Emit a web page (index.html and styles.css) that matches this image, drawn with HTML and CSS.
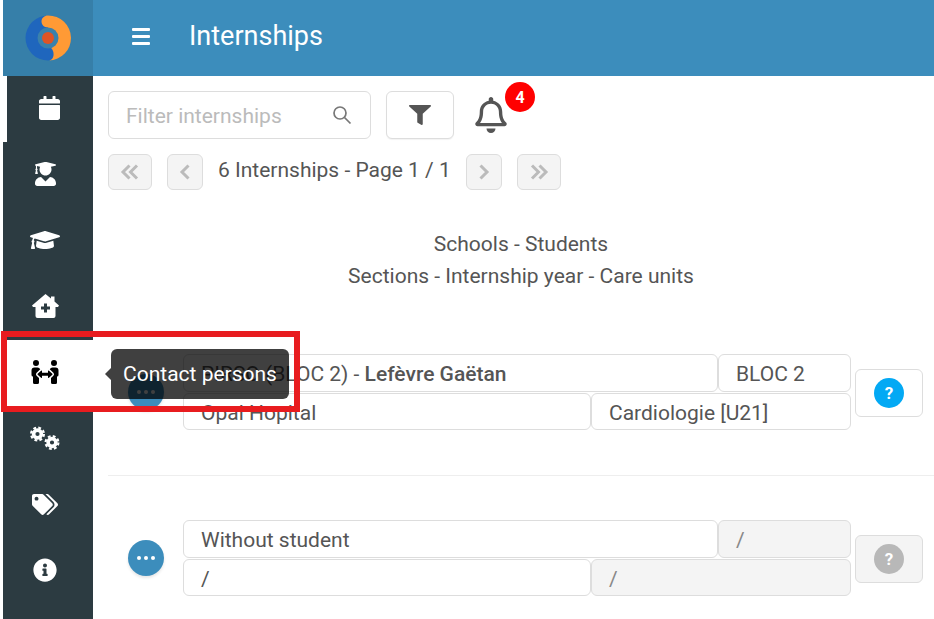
FILE: index.html
```html
<!DOCTYPE html>
<html lang="en">
<head>
<meta charset="utf-8">
<title>Internships</title>
<link rel="stylesheet" href="styles.css">
</head>
<body>
<header class="topbar">
  <div class="logo-cell">
    <svg class="logo" viewBox="0 0 46 46"><circle cx="23" cy="23" r="22.500" fill="#1f66bd"/><path d="M23 .5A22.500 22.500 0 0 1 24 45.500C28 45 29.500 40 28 36C26.500 32 23 31 23 23L23 12.500C19 12.500 16.500 9.500 16.500 6.500C16.500 3 19.500 .5 23 .5Z" fill="#ff9a35"/><circle cx="23" cy="23" r="10.500" fill="#3a81ab"/><circle cx="23" cy="23" r="6" fill="#e05424"/></svg>
  </div>
  <button class="burger" type="button" aria-label="Menu"><span></span><span></span><span></span></button>
  <h1 class="page-title">Internships</h1>
</header>
<div class="body">
  <nav class="sidebar">
    <a class="nav-item first"><svg class="ico" width="21" height="24" viewBox="0 0 448 512"><path d="M12 192h424c6.600 0 12 5.400 12 12v260c0 26.500-21.500 48-48 48H48c-26.500 0-48-21.500-48-48V204c0-6.600 5.400-12 12-12zm436-44v-36c0-26.500-21.500-48-48-48h-48V12c0-6.600-5.400-12-12-12h-40c-6.600 0-12 5.400-12 12v52H160V12c0-6.600-5.400-12-12-12h-40c-6.600 0-12 5.400-12 12v52H48C21.500 64 0 85.500 0 112v36c0 6.600 5.400 12 12 12h424c6.600 0 12-5.400 12-12z"/></svg></a>
    <a class="nav-item"><svg class="ico" width="21" height="24" viewBox="0 0 448 512"><path d="M319.400 320.600L224 416l-95.400-95.400C57.100 323.700 0 382.200 0 454.400v9.600c0 26.500 21.500 48 48 48h352c26.500 0 48-21.500 48-48v-9.600c0-72.200-57.100-130.700-128.600-133.800zM13.600 79.800l6.400 1.500v58.400c-7 4.200-12 11.500-12 20.300 0 8.400 4.600 15.400 11.100 19.700L3.500 242c-1.700 6.900 2.100 14 7.600 14h41.800c5.500 0 9.300-7.100 7.600-14l-15.600-62.300C51.400 175.400 56 168.400 56 160c0-8.800-5-16.100-12-20.300V87.100l66 15.900c-8.600 17.200-14 36.400-14 57 0 70.700 57.300 128 128 128s128-57.300 128-128c0-20.600-5.300-39.800-14-57l96.300-23.200c18.200-4.400 18.200-27.100 0-31.500l-190.400-46c-13-3.100-26.700-3.100-39.700 0L13.600 48.200c-18.100 4.400-18.100 27.200 0 31.600z"/></svg></a>
    <a class="nav-item"><svg class="ico" width="30" height="24" viewBox="0 0 640 512"><path d="M622.340 153.200L343.400 67.500c-15.200-4.670-31.600-4.670-46.790 0L17.660 153.200c-23.540 7.230-23.540 38.360 0 45.590l48.630 14.940c-10.670 13.190-17.230 29.280-17.880 46.900C38.780 266.150 32 276.110 32 288c0 10.780 5.680 19.850 13.860 25.650L20.330 428.530C18.110 438.520 25.710 448 35.940 448h56.110c10.240 0 17.840-9.480 15.620-19.470L82.140 313.650C90.320 307.850 96 298.780 96 288c0-11.570-6.470-21.250-15.660-26.870.76-15.020 8.440-28.300 20.690-36.720L296.600 284.500c9.060 2.780 26.440 6.250 46.790 0l278.950-85.700c23.550-7.240 23.550-38.360 0-45.600zM352.790 315.090c-28.530 8.760-52.840 3.920-65.590 0l-145.020-44.550L128 384c0 35.350 85.960 64 192 64s192-28.650 192-64l-14.180-113.470-145.030 44.560z"/></svg></a>
    <a class="nav-item"><svg class="ico" width="27" height="24" viewBox="0 0 27 24"><path fill-rule="evenodd" d="M13.500 0L19 4.500V2.500H22.500V7.500L27 11.500L26 13H23.500V22a2 2 0 0 1-2 2H5.500a2 2 0 0 1-2-2V13H1L0 11.500ZM12 9.500H15V12.500H18V15.500H15V18.500H12V15.500H9V12.500H12Z"/></svg></a>
    <a class="nav-item active"><svg class="ico" width="28" height="24" viewBox="0 0 576 512"><path d="M96,128A64,64,0,1,0,32,64,64,64,0,0,0,96,128Zm0,176.080a44.110,44.110,0,0,1,13.640-32L181.770,204c1.650-1.550,3.770-2.310,5.610-3.570A63.910,63.910,0,0,0,128,160H64A64,64,0,0,0,0,224V320a32,32,0,0,0,32,32V480a32,32,0,0,0,32,32h64a32,32,0,0,0,32-32V383.610l-50.360-47.530A44.080,44.080,0,0,1,96,304.080ZM480,128a64,64,0,1,0-64-64A64,64,0,0,0,480,128Zm32,32H448a63.910,63.910,0,0,0-59.380,40.420c1.840,1.270,4,2,5.620,3.590l72.120,68.060a44.370,44.370,0,0,1,0,64L416,383.620V480a32,32,0,0,0,32,32h64a32,32,0,0,0,32-32V352a32,32,0,0,0,32-32V224A64,64,0,0,0,512,160ZM444.400,295.340l-72.120-68.060A12,12,0,0,0,352,236v36H224V236a12,12,0,0,0-20.280-8.730L131.600,295.340a12.400,12.400,0,0,0,0,17.470l72.120,68.070A12,12,0,0,0,224,372.140V336H352v36.140a12,12,0,0,0,20.280,8.740l72.120-68.070A12.400,12.400,0,0,0,444.400,295.340Z"/></svg></a>
    <a class="nav-item"><svg class="ico" width="30" height="24" viewBox="0 0 30 24"><g fill="none" stroke="#fff"><circle cx="7.500" cy="8" r="3.900" stroke-width="3.600"/><circle cx="7.500" cy="8" r="6.400" stroke-width="2.200" stroke-dasharray="2.800 2.230"/><circle cx="22" cy="16.500" r="3.900" stroke-width="3.600"/><circle cx="22" cy="16.500" r="6.400" stroke-width="2.200" stroke-dasharray="2.800 2.230"/></g></svg></a>
    <a class="nav-item"><svg class="ico" width="26" height="21" viewBox="0 0 640 512"><path d="M497.941 225.941L286.059 14.059A48 48 0 0 0 252.118 0H48C21.490 0 0 21.490 0 48v204.118a48 48 0 0 0 14.059 33.941l211.882 211.882c18.744 18.745 49.136 18.746 67.882 0l204.118-204.118c18.745-18.745 18.745-49.137 0-67.882zM112 160c-26.510 0-48-21.490-48-48s21.490-48 48-48 48 21.490 48 48-21.490 48-48 48zm513.941 133.823L421.823 497.941c-18.745 18.745-49.137 18.745-67.882 0l-.36-.36L527.640 323.522c16.999-16.999 26.360-39.600 26.360-63.640s-9.362-46.641-26.360-63.640L331.397 0h48.721a48 48 0 0 1 33.941 14.059l211.882 211.882c18.745 18.745 18.745 49.137 0 67.882z"/></svg></a>
    <a class="nav-item"><svg class="ico" width="24" height="24" viewBox="0 0 512 512"><path d="M256 8C119.043 8 8 119.083 8 256c0 136.997 111.043 248 248 248s248-111.003 248-248C504 119.083 392.957 8 256 8zm0 110c23.196 0 42 18.804 42 42s-18.804 42-42 42-42-18.804-42-42 18.804-42 42-42zm56 254c0 6.627-5.373 12-12 12h-88c-6.627 0-12-5.373-12-12v-24c0-6.627 5.373-12 12-12h12v-64h-12c-6.627 0-12-5.373-12-12v-24c0-6.627 5.373-12 12-12h64c6.627 0 12 5.373 12 12v100h12c6.627 0 12 5.373 12 12v24z"/></svg></a>
  </nav>
  <main class="content">
    <div class="toolbar">
      <label class="search"><span class="placeholder">Filter internships</span>
        <svg width="20" height="20" viewBox="0 0 20 20" fill="none" stroke="#777" stroke-width="1.700"><circle cx="8" cy="8" r="6"/><path d="M12.500 12.500L18.500 18.500"/></svg>
      </label>
      <button class="filter-btn" type="button" aria-label="Filter"><svg width="22" height="20" viewBox="0 0 512 512" preserveAspectRatio="none" fill="#555"><path d="M487.976 0H24.028C2.710 0-8.047 25.866 7.058 40.971L192 225.941V432c0 7.831 3.821 15.170 10.237 19.662l80 55.980C298.020 518.690 320 507.493 320 487.980V225.941l184.947-184.970C520.021 25.896 509.338 0 487.976 0z"/></svg></button>
      <div class="bell">
        <svg width="32" height="36" viewBox="0 0 448 512" fill="#555"><path d="M439.390 362.290c-19.320-20.760-55.470-51.990-55.470-154.290 0-77.700-54.480-139.900-127.940-155.160V32c0-17.670-14.320-32-31.980-32s-31.980 14.330-31.980 32v20.840C118.560 68.100 64.080 130.300 64.080 208c0 102.300-36.150 133.530-55.470 154.290-6 6.450-8.660 14.160-8.610 21.710.11 16.400 12.980 32 32.100 32h383.800c19.120 0 32-15.600 32.100-32 .05-7.550-2.610-15.270-8.610-21.710zM67.530 368c21.220-27.970 44.420-74.330 44.530-159.420 0-.2-.06-.38-.06-.58 0-61.860 50.140-112 112-112s112 50.140 112 112c0 .2-.06.38-.06.58.11 85.100 23.310 131.460 44.530 159.420H67.530zM224 512c35.320 0 63.970-28.650 63.970-63.970H160.030C160.030 483.350 188.680 512 224 512z"/></svg>
        <span class="badge">4</span>
      </div>
    </div>
    <div class="pager">
      <button class="page-btn wide" type="button" aria-label="First"><svg width="20" height="16" viewBox="0 0 20 16"><path d="M9.500 1.500L3 8l6.500 6.500M17 1.500L10.500 8l6.500 6.500"/></svg></button>
      <button class="page-btn" type="button" aria-label="Previous"><svg width="12" height="16" viewBox="0 0 12 16"><path d="M9.500 1.500L3 8l6.500 6.500"/></svg></button>
      <span class="page-text">6 Internships - Page 1 / 1</span>
      <button class="page-btn" type="button" aria-label="Next"><svg width="12" height="16" viewBox="0 0 12 16"><path d="M2.500 1.500L9 8l-6.500 6.500"/></svg></button>
      <button class="page-btn wide" type="button" aria-label="Last"><svg width="20" height="16" viewBox="0 0 20 16"><path d="M3 1.500L9.500 8 3 14.500M10.500 1.500L17 8l-6.500 6.500"/></svg></button>
    </div>
    <div class="columns">
      <div>Schools - Students</div>
      <div>Sections - Internship year - Care units</div>
    </div>
    <section class="row first-row">
      <button class="more" type="button" aria-label="More"><i></i><i></i><i></i></button>
      <div class="fields">
        <div class="field"><span>PIRSO (BLOC 2) - <b>Lefèvre Gaëtan</b></span></div>
        <div class="field">BLOC 2</div>
        <div class="field line2 a">Opal Hopital</div>
        <div class="field line2 b">Cardiologie [U21]</div>
      </div>
      <button class="state" type="button"><span class="q blue">?</span></button>
    </section>
    <section class="row second-row">
      <button class="more" type="button" aria-label="More"><i></i><i></i><i></i></button>
      <div class="fields">
        <div class="field">Without student</div>
        <div class="field off">/</div>
        <div class="field line2 a">/</div>
        <div class="field line2 b off">/</div>
      </div>
      <button class="state off" type="button"><span class="q grey">?</span></button>
    </section>
  </main>
</div>
<div class="tooltip">Contact persons</div>
<div class="annotation"></div>
</body>
</html>
```

FILE: styles.css
```css
* { box-sizing: border-box; }
html, body { margin: 0; height: 100%; }
body {
  width: 934px;
  height: 619px;
  overflow: hidden;
  font-family: Roboto, "Liberation Sans", sans-serif;
  font-size: 21px;
  color: #555;
  background: #fff;
  position: relative;
  padding-left: 3px;
}
button { font: inherit; padding: 0; cursor: pointer; }

.topbar {
  height: 76px;
  margin-left: -3px;
  padding-left: 3px;
  display: flex;
  align-items: center;
  background: linear-gradient(#fff, #fff) left / 3px 100% no-repeat, #3c8dbc;
}
.logo-cell {
  width: 90px;
  height: 76px;
  background: #367fa9;
  display: flex;
  align-items: center;
  justify-content: center;
}
.logo { width: 46px; height: 46px; margin-left: -1px; margin-top: -1px; }
.burger {
  width: 18px;
  margin-left: 39px;
  margin-top: -4px;
  background: none;
  border: 0;
  display: flex;
  flex-direction: column;
  gap: 4px;
}
.burger span { display: block; width: 18px; height: 3px; background: #fff; border-radius: 1px; }
.page-title { margin: -4px 0 0 39px; font-size: 27px; font-weight: 400; color: #fff; }

.body { display: flex; height: 543px; }
.sidebar { width: 90px; flex: none; background: #2c3b41; display: flex; flex-direction: column; }
.nav-item { height: 66px; padding: 0 6px 2px 0; display: flex; align-items: center; justify-content: center; }
.nav-item.first { border-left: 4px solid #fff; padding-right: 1px; }
.nav-item.active { background: #fff; }
.ico { fill: #fff; }
.active .ico { fill: #000; }

.content { flex: 1; min-width: 0; padding: 15px 0 0 15px; }
.toolbar { display: flex; align-items: flex-start; height: 48px; }
.search {
  width: 263px;
  height: 48px;
  border: 1px solid #ddd;
  border-radius: 6px;
  padding: 0 18px 0 17px;
  display: flex;
  align-items: center;
  justify-content: space-between;
}
.placeholder { color: #bbb; position: relative; top: 1px; }
.filter-btn {
  width: 68px;
  height: 48px;
  margin-left: 15px;
  background: #fff;
  border: 1px solid #ddd;
  border-radius: 6px;
  display: flex;
  align-items: center;
  justify-content: center;
  box-shadow: 0 1px 1px rgba(0,0,0,.05);
}
.bell { position: relative; margin-left: 21px; width: 33px; height: 48px; display: flex; align-items: flex-start; padding-top: 6px; }
.badge {
  position: absolute;
  left: 30px;
  top: -9px;
  width: 30px;
  height: 30px;
  border-radius: 50%;
  background: #f00;
  color: #fff;
  font-size: 16px;
  font-weight: 700;
  display: flex;
  align-items: center;
  justify-content: center;
}

.pager { display: flex; align-items: center; margin-top: 15px; height: 36px; }
.page-btn {
  width: 36px;
  height: 36px;
  background: #f4f4f4;
  border: 1px solid #ddd;
  border-radius: 6px;
  display: flex;
  align-items: center;
  justify-content: center;
}
.page-btn.wide { width: 44px; }
.page-btn + .page-btn { margin-left: 15px; }
.page-btn svg { fill: none; stroke: #bbb; stroke-width: 3; }
.page-text { margin: 0 16px 0 15px; width: 232px; white-space: nowrap; position: relative; top: -2px; }

.columns { margin-top: 38px; width: 826px; text-align: center; line-height: 32px; }

.row { position: relative; display: flex; align-items: center; height: 76px; width: 826px; }
.first-row { margin-top: 62px; }
.second-row { margin-top: 90px; }
.second-row::before {
  content: "";
  position: absolute;
  left: 0;
  right: 0;
  top: -45px;
  height: 1px;
  background: #eee;
}
.more {
  width: 36px;
  height: 36px;
  margin-left: 20px;
  border: 0;
  border-radius: 50%;
  background: #3c8dbc;
  box-shadow: 0 2px 3px rgba(0,0,0,.1);
  display: flex;
  align-items: center;
  justify-content: center;
  gap: 3px;
  flex: none;
}
.more i { display: block; width: 4px; height: 4px; border-radius: 50%; background: #fff; }
.fields {
  margin-left: 19px;
  width: 668px;
  height: 76px;
  display: grid;
  grid-template-columns: 408px 127px 133px;
  grid-template-rows: 38px 37px;
  row-gap: 1px;
  flex: none;
}
.field {
  border: 1px solid #ddd;
  border-radius: 6px;
  padding: 1px 0 0 17px;
  display: flex;
  align-items: center;
  white-space: nowrap;
  background: #fff;
  grid-column: span 2;
}
.field:nth-child(2) { grid-column: span 1; }
.field.line2 { padding-top: 2px; }
.field.line2.a { grid-column: 1; }
.field.line2.b { grid-column: 2 / span 2; }
.field b { font-weight: 500; }
.field.off { background: #f4f4f4; color: #888; }
.state {
  width: 68px;
  height: 48px;
  margin: 2px 0 0 4px;
  flex: none;
  background: #fff;
  border: 1px solid #ddd;
  border-radius: 6px;
  display: flex;
  align-items: center;
  justify-content: center;
}
.state.off { background: #f4f4f4; }
.q {
  width: 30px;
  height: 30px;
  border-radius: 50%;
  color: #fff;
  font-size: 17px;
  font-weight: 700;
  display: flex;
  align-items: center;
  justify-content: center;
}
.q.blue { background: #03a9f4; }
.q.grey { background: #b8b8b8; }

.tooltip {
  position: absolute;
  left: 111px;
  top: 349px;
  width: 178px;
  height: 50px;
  background: rgba(0,0,0,.75);
  border-radius: 6px;
  color: #fff;
  display: flex;
  align-items: center;
  justify-content: center;
}
.tooltip::before {
  content: "";
  position: absolute;
  left: -6px;
  top: 19px;
  border: 6px solid transparent;
  border-left: 0;
  border-right-color: rgba(0,0,0,.75);
}
.annotation {
  position: absolute;
  left: 1px;
  top: 331px;
  width: 299px;
  height: 81px;
  border: 6px solid #e81c1f;
  pointer-events: none;
}
```
